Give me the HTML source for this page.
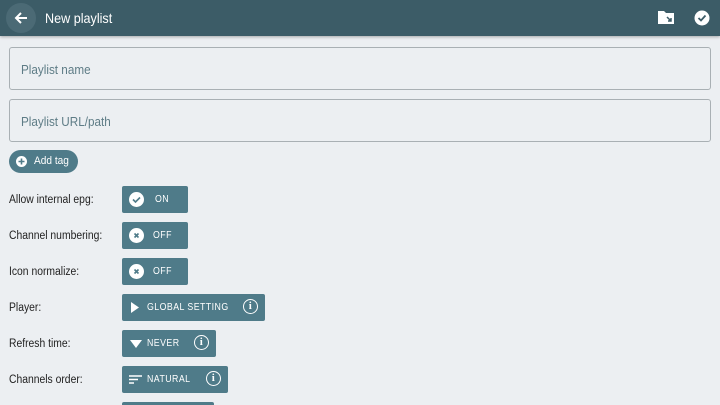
<!DOCTYPE html><html><head><style>
html,body{margin:0;height:405px;overflow:hidden}
body{width:720px;background:#eceff2;font-family:"Liberation Sans",sans-serif;position:relative}
.hdr{position:absolute;left:0;top:0;width:720px;height:36px;background:#3c5c67;box-shadow:0 1px 3px rgba(0,0,0,.3)}
.back{position:absolute;left:6px;top:3px;width:30px;height:30px;border-radius:50%;background:#4b6a75}
.title{position:absolute;left:45px;top:10px;color:#fff;font-size:14px;transform:scaleX(.9);transform-origin:left}
.inp{position:absolute;left:9px;width:700px;height:41px;border:1px solid #a9b0b4;border-radius:3px}
.inp span{position:absolute;left:11px;top:14px;color:#5e7c86;font-size:13px;transform:scaleX(.9);transform-origin:left;white-space:nowrap}
.pill{position:absolute;left:9px;top:150px;width:69px;height:23px;border-radius:12px;background:#4f7b89;color:#fff;font-size:11px}
.lbl{position:absolute;left:9px;font-size:11.5px;color:#222;transform:scaleX(.9);transform-origin:left;white-space:nowrap}
.btn{position:absolute;left:122px;height:27px;background:#4f7b89;border-radius:2px;color:#fff;font-size:10px;letter-spacing:.5px}
.btn .t{position:absolute;top:8px;white-space:nowrap;transform:scaleX(.88);transform-origin:left}
.ic{position:absolute;left:7px;top:6px}
.info{position:absolute;top:5px;width:13px;height:13px;border:1.6px solid #fff;border-radius:50%;font-size:11px;text-align:center;line-height:13px;font-weight:bold;font-family:"Liberation Serif",serif}
</style></head><body>
<div class="hdr"><div class="back"></div>
<svg style="position:absolute;left:13px;top:10px" width="16" height="16" viewBox="0 0 16 16"><path d="M14 8H3M8 3L3 8l5 5" stroke="#fff" stroke-width="2" fill="none"/></svg>
<div class="title">New playlist</div>
<svg style="position:absolute;left:657px;top:10px" width="18" height="15" viewBox="0 0 18 15"><path d="M1 1h6l2 2h8v11H1z" fill="#fff"/><path d="M10 7l4 4M14 8v3h-3" stroke="#3c5c67" stroke-width="1.5" fill="none"/></svg>
<svg style="position:absolute;left:694px;top:10px" width="16" height="16"><circle cx="8" cy="8" r="7.5" fill="#fff"/><path d="M4.5 8l2.5 2.5 4.5-5" stroke="#3c5c67" stroke-width="1.8" fill="none"/></svg>
</div>
<div class="inp" style="top:47px"><span>Playlist name</span></div>
<div class="inp" style="top:99px"><span>Playlist URL/path</span></div>
<div class="pill"><svg style="position:absolute;left:7px;top:6px" width="11" height="11"><circle cx="5.5" cy="5.5" r="5.5" fill="#fff"/><path d="M5.5 2.5v6M2.5 5.5h6" stroke="#4f7b89" stroke-width="1.6"/></svg><span style="position:absolute;left:25px;top:5px;transform:scaleX(.92);transform-origin:left">Add tag</span></div>

<div class="lbl" style="top:194px">Allow internal epg:</div>
<div class="btn" style="top:186px;width:66px"><svg class="ic" width="15" height="15"><circle cx="7.5" cy="7.5" r="7.5" fill="#fff"/><path d="M4 7.5l2.5 2.5 4.5-4.5" stroke="#4f7b89" stroke-width="1.6" fill="none"/></svg><span class="t" style="left:33px">ON</span></div>
<div class="lbl" style="top:230px">Channel numbering:</div>
<div class="btn" style="top:222px;width:66px"><svg class="ic" width="15" height="15"><circle cx="7.5" cy="7.5" r="7.5" fill="#fff"/><path d="M5.5 5.5l4 4M9.5 5.5l-4 4" stroke="#4f7b89" stroke-width="1.6"/></svg><span class="t" style="left:31px">OFF</span></div>
<div class="lbl" style="top:266px">Icon normalize:</div>
<div class="btn" style="top:258px;width:66px"><svg class="ic" width="15" height="15"><circle cx="7.5" cy="7.5" r="7.5" fill="#fff"/><path d="M5.5 5.5l4 4M9.5 5.5l-4 4" stroke="#4f7b89" stroke-width="1.6"/></svg><span class="t" style="left:31px">OFF</span></div>
<div class="lbl" style="top:302px">Player:</div>
<div class="btn" style="top:294px;width:143px"><svg class="ic" style="left:9px" width="10" height="15"><path d="M0 2l8 5.5L0 13z" fill="#fff"/></svg><span class="t" style="left:25px">GLOBAL SETTING</span><div class="info" style="left:121px">i</div></div>
<div class="lbl" style="top:338px">Refresh time:</div>
<div class="btn" style="top:330px;width:94px"><svg class="ic" style="left:8px" width="13" height="15"><path d="M0 4h12L6 12z" fill="#fff"/></svg><span class="t" style="left:25px">NEVER</span><div class="info" style="left:72px">i</div></div>
<div class="lbl" style="top:374px">Channels order:</div>
<div class="btn" style="top:366px;width:106px"><svg class="ic" width="14" height="15"><path d="M0 4h13M0 7.5h9M0 11h5" stroke="#fff" stroke-width="1.6"/></svg><span class="t" style="left:25px">NATURAL</span><div class="info" style="left:84px">i</div></div>
<div class="btn" style="top:402px;width:92px"></div>
</body></html>
